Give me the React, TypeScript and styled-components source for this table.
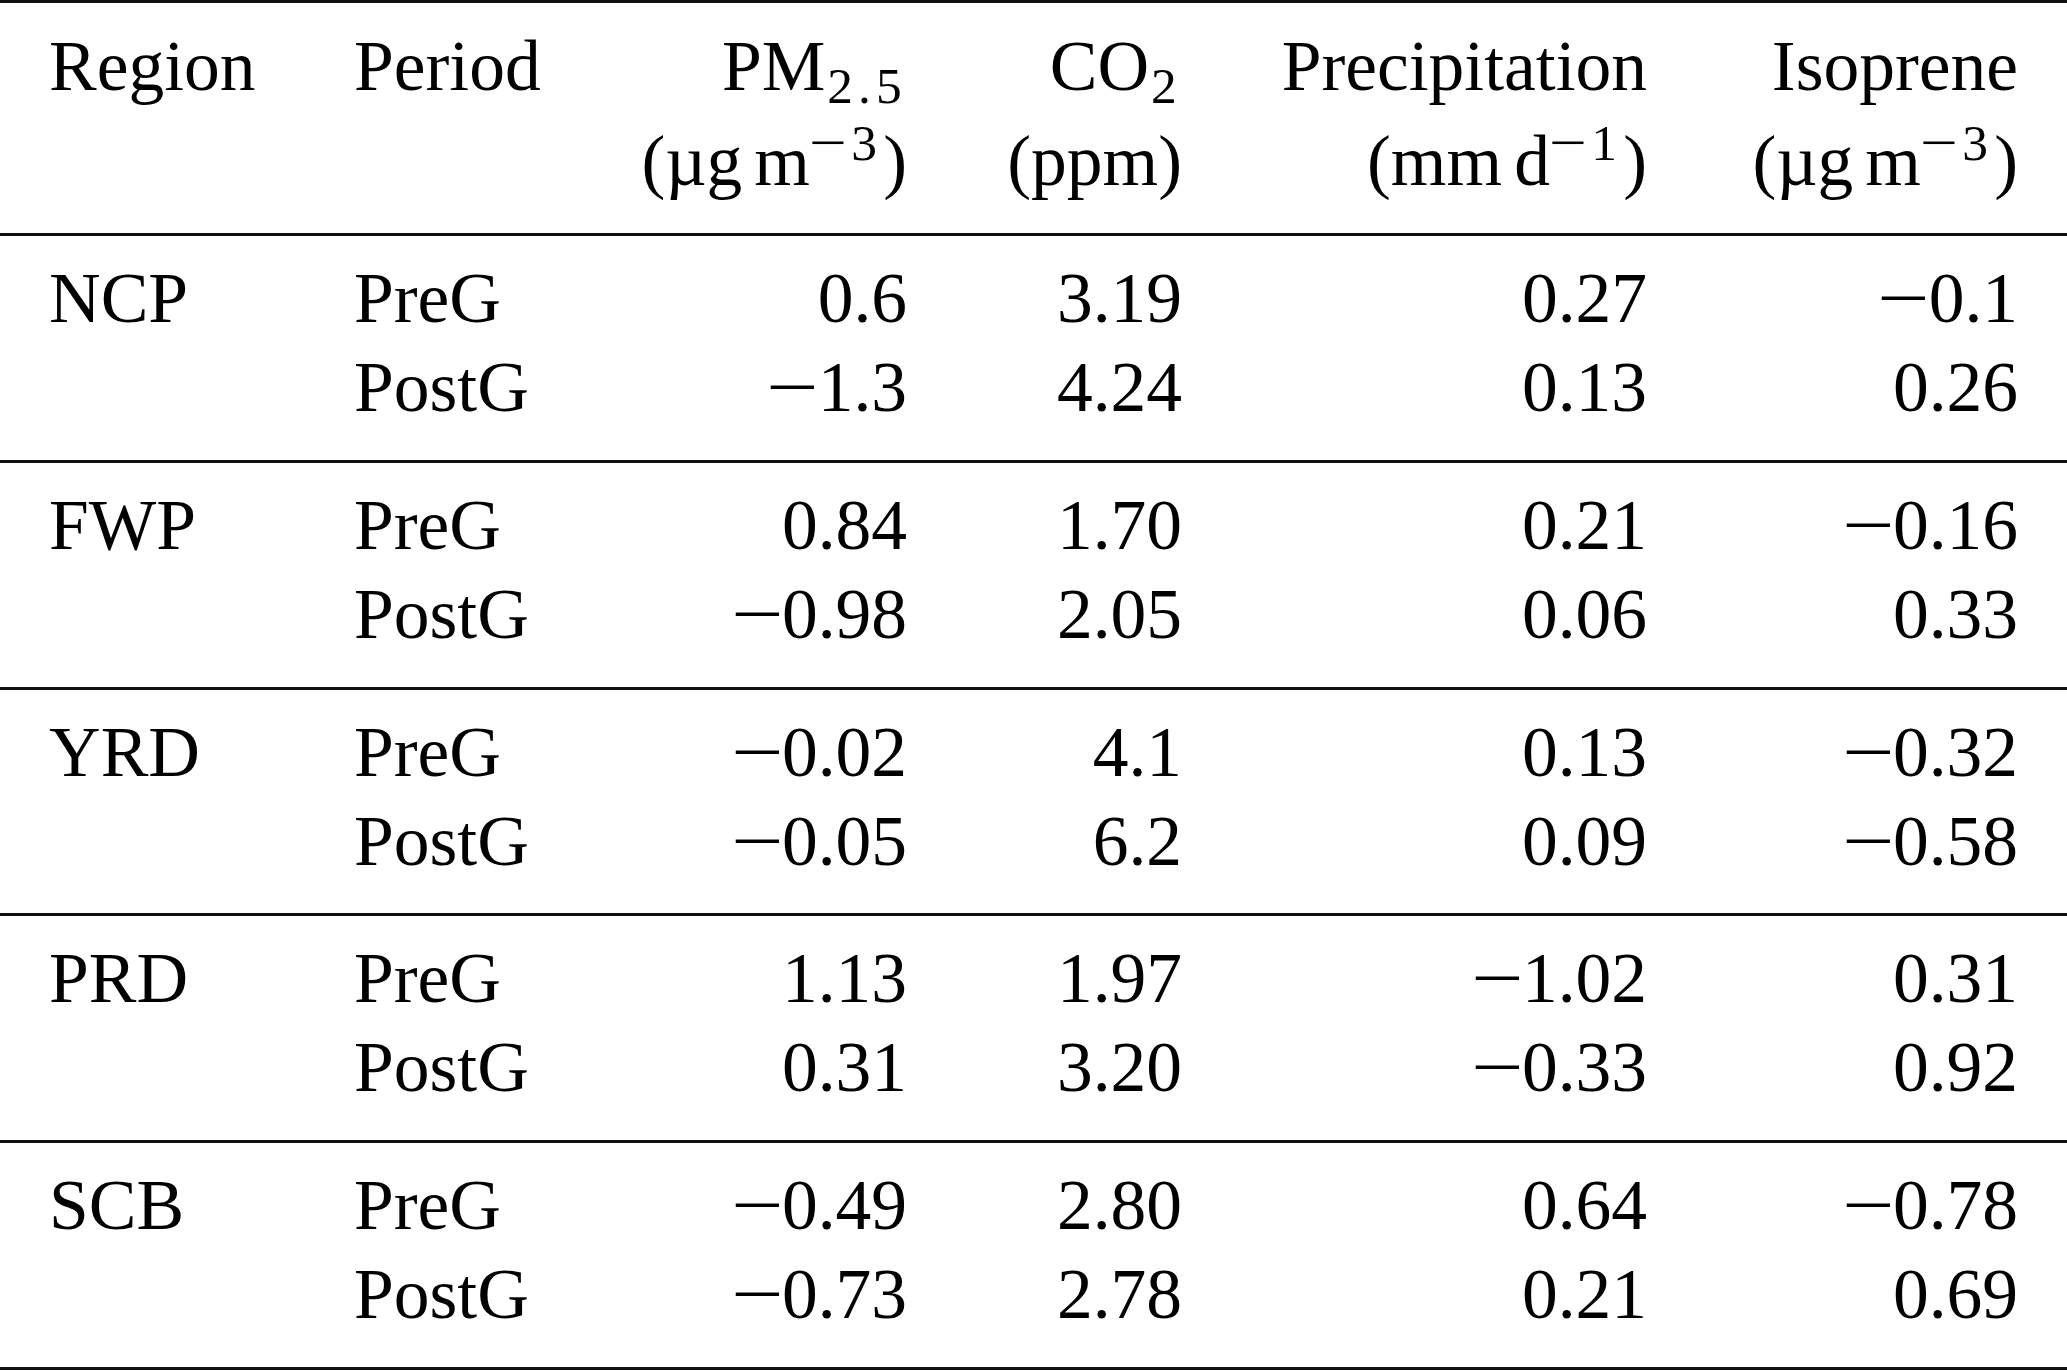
import React from 'react'
import styled, { createGlobalStyle, css } from 'styled-components'

const MINUS = '\u2212'

const groups = [
  {
    region: 'NCP',
    rows: [
      ['PreG', '0.6', '3.19', '0.27', `${MINUS}0.1`],
      ['PostG', `${MINUS}1.3`, '4.24', '0.13', '0.26'],
    ],
  },
  {
    region: 'FWP',
    rows: [
      ['PreG', '0.84', '1.70', '0.21', `${MINUS}0.16`],
      ['PostG', `${MINUS}0.98`, '2.05', '0.06', '0.33'],
    ],
  },
  {
    region: 'YRD',
    rows: [
      ['PreG', `${MINUS}0.02`, '4.1', '0.13', `${MINUS}0.32`],
      ['PostG', `${MINUS}0.05`, '6.2', '0.09', `${MINUS}0.58`],
    ],
  },
  {
    region: 'PRD',
    rows: [
      ['PreG', '1.13', '1.97', `${MINUS}1.02`, '0.31'],
      ['PostG', '0.31', '3.20', `${MINUS}0.33`, '0.92'],
    ],
  },
  {
    region: 'SCB',
    rows: [
      ['PreG', `${MINUS}0.49`, '2.80', '0.64', `${MINUS}0.78`],
      ['PostG', `${MINUS}0.73`, '2.78', '0.21', '0.69'],
    ],
  },
]

const columnWidths = [305, 284, 367, 275, 465, 371]

// numbers are typeset like $-0.1$, so the minus gets a longer bar
const Num = ({ value }: { value: string }) =>
  value.startsWith(MINUS) ? (
    <>
      <Minus>{MINUS}</Minus>
      {value.slice(1)}
    </>
  ) : (
    <>{value}</>
  )

const App = () => {
  return (
    <>
      <GlobalStyle />
      <Table>
        <colgroup>
          {columnWidths.map((w, i) => (
            <Col key={i} $width={w} />
          ))}
        </colgroup>
        <thead>
          <tr>
            <HeadCell>
              <Line>Region</Line>
            </HeadCell>
            <HeadCell>
              <Line>Period</Line>
            </HeadCell>
            <HeadCell $right>
              <Line>
                PM<Sub>2.5</Sub>
              </Line>
              <Line $second>
                (µg<Thin />m<Sup><Minus>{MINUS}</Minus>3</Sup>)
              </Line>
            </HeadCell>
            <HeadCell $right>
              <Line>
                CO<Sub>2</Sub>
              </Line>
              <Line $second>(ppm)</Line>
            </HeadCell>
            <HeadCell $right>
              <Line>Precipitation</Line>
              <Line $second>
                (mm<Thin />d<Sup><Minus>{MINUS}</Minus>1</Sup>)
              </Line>
            </HeadCell>
            <HeadCell $right>
              <Line>Isoprene</Line>
              <Line $second>
                (µg<Thin />m<Sup><Minus>{MINUS}</Minus>3</Sup>)
              </Line>
            </HeadCell>
          </tr>
        </thead>
        {groups.map((g, gi) => (
          <tbody key={g.region}>
            {g.rows.map((r, ri) => {
              const first = ri === 0
              const last = ri === g.rows.length - 1
              const end = last && gi === groups.length - 1
              return (
                <tr key={ri}>
                  <Cell $first={first} $last={last} $end={end}>
                    {first ? g.region : ''}
                  </Cell>
                  <Cell $first={first} $last={last} $end={end}>
                    {r[0]}
                  </Cell>
                  {r.slice(1).map((v, vi) => (
                    <Cell key={vi} $right $first={first} $last={last} $end={end}>
                      <Num value={v} />
                    </Cell>
                  ))}
                </tr>
              )
            })}
          </tbody>
        ))}
      </Table>
    </>
  )
}

export default App

const GlobalStyle = createGlobalStyle`
  html, body {
    margin: 0;
    padding: 0;
    background: #ffffff;
  }
  body {
    font-family: "Liberation Serif", "Times New Roman", serif;
    color: #000000;
  }
`

const Table = styled.table`
  width: 2067px;
  table-layout: fixed;
  border-collapse: separate;
  border-spacing: 0;
  font-family: "Liberation Serif", "Times New Roman", serif;
  font-size: 71.5px;
  line-height: 89px;
  color: #000;
`

const Col = styled.col<{ $width: number }>`
  width: ${(p) => p.$width}px;
`

const cellPadding = css<{ $right?: boolean }>`
  padding-left: 49px;
  padding-right: 49px;
  text-align: ${(p) => (p.$right ? 'right' : 'left')};
  white-space: nowrap;
`

const HeadCell = styled.th<{ $right?: boolean }>`
  ${cellPadding};
  font-weight: normal;
  vertical-align: top;
  border-top: 3px solid #111;
  padding-top: 18px;
  padding-bottom: 28.5px;
`

const Line = styled.span<{ $second?: boolean }>`
  display: block;
  height: 89px;
  margin-top: ${(p) => (p.$second ? '5.5px' : '0')};
`

const Cell = styled.td<{ $right?: boolean; $first?: boolean; $last?: boolean; $end?: boolean }>`
  ${cellPadding};
  vertical-align: top;
  height: 89px;
  padding-top: 0;
  padding-bottom: 0;
  ${(p) =>
    p.$first &&
    css`
      border-top: 3px solid #111;
      padding-top: 17px;
    `}
  ${(p) =>
    p.$last &&
    css`
      padding-bottom: 28.8px;
    `}
  ${(p) =>
    p.$end &&
    css`
      border-bottom: 3px solid #111;
    `}
`

const Minus = styled.span`
  display: inline-block;
  transform: scaleX(1.3);
  margin: 0 0.07em;
`

const Sub = styled.sub`
  font-size: 0.72em;
  line-height: 0;
  vertical-align: -0.25em;
  letter-spacing: 0.1em;
  margin-left: 2px;
`

const Sup = styled.sup`
  font-size: 0.72em;
  line-height: 0;
  vertical-align: 0.47em;
  letter-spacing: 0.1em;
  margin-right: 1px;
`

const Thin = styled.span`
  display: inline-block;
  width: 0.17em;
`
